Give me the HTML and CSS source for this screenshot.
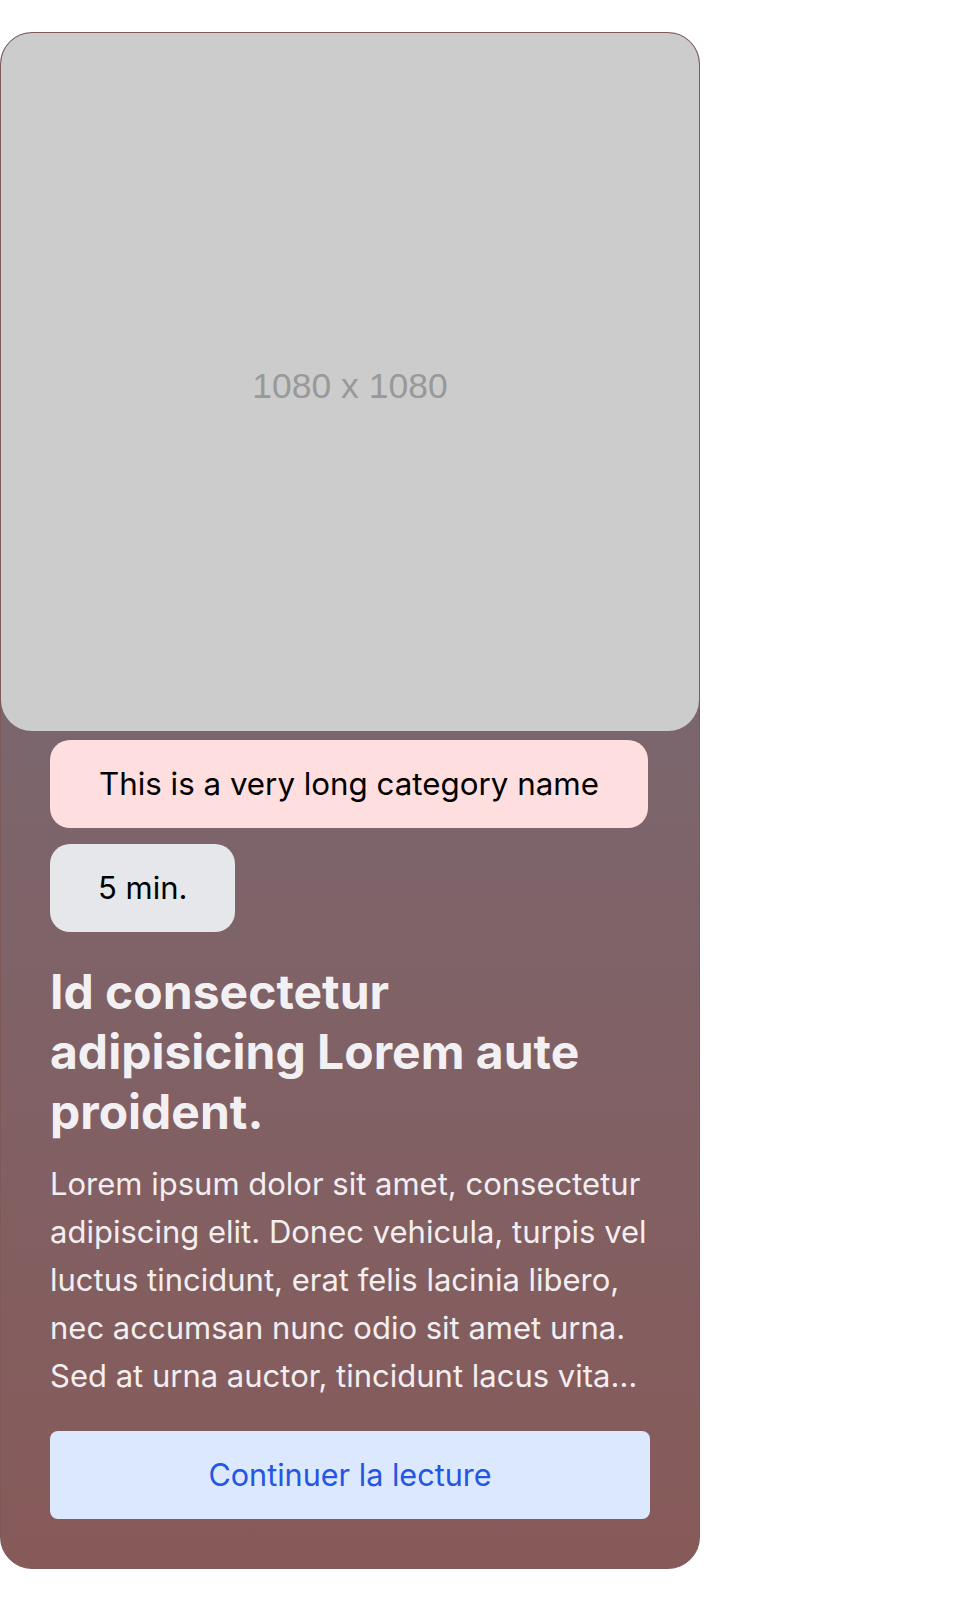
FILE: index.html
```html
<!DOCTYPE html>
<html lang="fr">
<head>
<meta charset="utf-8">
<title>Article card</title>
<link rel="stylesheet" href="styles.css">
</head>
<body>
<article class="card">
  <div class="cover"><span class="cover-label">1080 x 1080</span></div>
  <div class="body">
    <div class="tags">
      <span class="tag tag-category">This is a very long category name</span>
      <span class="tag tag-time">5 min.</span>
    </div>
    <h2 class="title">Id consectetur adipisicing Lorem aute proident.</h2>
    <p class="excerpt">Lorem ipsum dolor sit amet, consectetur adipiscing elit. Donec vehicula, turpis vel luctus tincidunt, erat felis lacinia libero, nec accumsan nunc odio sit amet urna. Sed at urna auctor, tincidunt lacus vitae, fermentum nisl. Integer posuere, justo vel gravida.</p>
    <a class="cta" href="#">Continuer la lecture</a>
  </div>
</article>
</body>
</html>
```
FILE: styles.css
```css
html, body {
  margin: 0;
  padding: 0;
  background: #ffffff;
}
body {
  padding-top: 32px;
  font-family: Inter, "Noto Sans", sans-serif;
}
.card {
  width: 700px;
  box-sizing: border-box;
  border: 1px solid #7f5858;
  border-radius: 32px;
  overflow: hidden;
  background: linear-gradient(180deg, #78686f 0%, #7b666d 45%, #875a59 100%);
}
.cover {
  height: 698px;
  background: #cccccc;
  border-radius: 31px;
  display: flex;
  align-items: center;
  justify-content: center;
}
.cover-label {
  padding-top: 8px;
  font-family: "Liberation Sans", Arial, sans-serif;
  font-size: 35.5px;
  color: #999999;
}
.body {
  padding: 9px 49px 49px;
  display: flex;
  flex-direction: column;
}
.tags {
  display: flex;
  flex-direction: column;
  align-items: flex-start;
  gap: 16px;
}
.tag {
  display: inline-block;
  font-size: 31px;
  line-height: 48px;
  padding: 20px 48px;
  border-radius: 20px;
  color: #000000;
}
.tag-category {
  font-size: 31.3px;
  padding: 20px 49px;
  background: #fedede;
}
.tag-time {
  background: #e5e7eb;
}
.title {
  margin: 30px 0 0;
  font-size: 48px;
  line-height: 60px;
  font-weight: 700;
  color: #f3f0f3;
}
.excerpt {
  margin: 18px 0 0;
  font-size: 31px;
  line-height: 48px;
  color: #f3eef0;
  display: -webkit-box;
  -webkit-line-clamp: 5;
  -webkit-box-orient: vertical;
  overflow: hidden;
}
.cta {
  margin-top: 31px;
  display: block;
  text-align: center;
  font-size: 30.6px;
  line-height: 48px;
  padding: 20px 0;
  border-radius: 8px;
  background: #dbe8fe;
  color: #2555e3;
  text-decoration: none;
}
```
